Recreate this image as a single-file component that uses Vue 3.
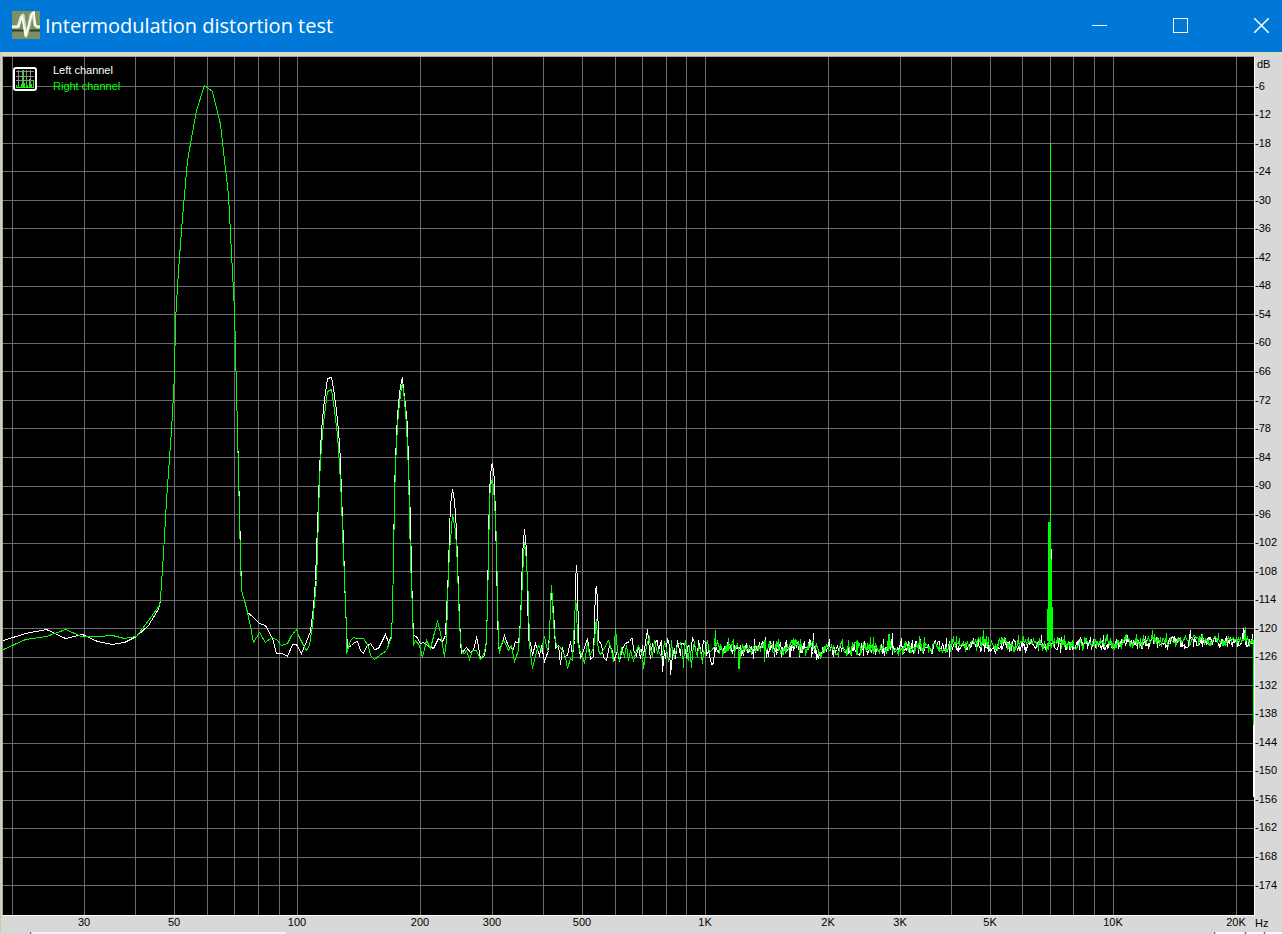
<script setup>
const PLOT = { left: 3, top: 57, width: 1251, height: 858 }

const dbRows = [
  86, 114, 143, 171, 200, 228, 257, 286, 314, 343, 371, 400, 428, 457, 486,
  514, 543, 571, 600, 628, 657, 685, 714, 743, 771, 800, 828, 857, 885,
]
const dbLabels = dbRows.map((_, i) => `-${(i + 1) * 6}`)

const hzColumns = [
  12, 84, 135, 174, 207, 234, 258, 279, 297, 420, 492, 543, 582, 615, 642,
  666, 686, 705, 828, 900, 951, 990, 1022, 1050, 1073, 1094, 1113, 1236,
]
const hzTicks = [
  ['30', 84], ['50', 174], ['100', 297], ['200', 420], ['300', 492], ['500', 582],
  ['1K', 705], ['2K', 828], ['3K', 900], ['5K', 990], ['10K', 1113], ['20K', 1236],
].map(([label, x], i, all) => ({ label, gap: x - (i ? all[i - 1][1] : PLOT.left) }))
const hzTail = PLOT.left + PLOT.width - 1236

const gridPath =
  dbRows.map((y) => `M${PLOT.left} ${y + 0.5}H${PLOT.left + PLOT.width}`).join('') +
  hzColumns.map((x) => `M${x + 0.5} ${PLOT.top}V${PLOT.top + PLOT.height}`).join('')

const leftPoints = `3,640 25,633 46,629 65,638 82,634 97,641 112,644 124,642 136,636 148,625 159,607
160,598 161,583 163,553 166,500 171,430 174,375 175,320 178,270 182,217 187,160 196,110 204,85 212,91 220,124 228,195 234,310 237,430 240,550 241,590 244,600
247,612 252,616 259,623 265,625 272,638 276,653 282,653 287,656 292,644 296,644 301,653 306,641 310,631 313,606 315,580 316,550 318,500 319,470 321,430 323,408 325,392 327,378 331,377 333,388 336,410 338,430 340,460 341,495 343,540 344,580 346,630
347,647 351,645 354,642 357,641 360,650 363,653 366,646 370,643 374,649 378,648 381,642 385,634 388,642 391,636 392,610 393,560 394,490 395,460 396,435 397,415 399,393 401,380 402,378 403,388 405,405 407,425 408,465 410,520 411,570 412,610
413,635 416,636 420,643 423,642 427,645 433,648 438,638 442,641 445,635 446,611 448,570 449,530 450,505 452,489 454,500 456,530 457,560 458,590 460,641 461,653 466,647 470,652 473,650 476,637 477,640 480,658 484,655 486,640
487,600 488,540 489,490 491,464 492,463 494,480 495,520 496,560 497,610 498,648 501,645 504,635 508,646 513,649 515,641 518,643 520,620 521,590 522,555 523,540 524,529 526,550 527,590 528,640 530,642 532,655 535,643 539,655 541,645 544,661
548,650 550,610 551,590 553,610 555,648 558,645 560,664 562,647 564,656 567,655 570,641 572,655 574,640 575,580 576,565 577,580 578,640 580,658 583,650 587,638 590,659 593,656 594,620 595,590 596,586 597,600 598,640
601,644 603,657 606,660 609,645 612,650 614,659 617,650 619,661 622,648 625,643 629,641 631,638 632,638 633,650 636,655 638,646 640,658 642,645 643,655 645,642 647,629 649,650 650,658 652,643 654,652 655,641 657,640 658,650 661,640 662,671 664,650 665,658 667,638 669,645 670,674 672,655 674,648 675,658 677,640 680,655 681,643
683,643 685,650 686,657 687,646 689,645 690,655 692,637 694,642 695,650 697,655 698,640 700,648 701,655 703,640 705,642 706,655 708,650 711,664 713,663 714,650`

const rightPoints = `3,649 25,639 46,636 65,629 81,636 97,636 112,635 124,638 136,636 148,620 159,605
160,598 161,583 163,553 166,500 171,430 174,375 175,320 178,270 182,217 187,160 196,110 204,85 212,91 220,124 228,195 234,310 237,430 240,560 241,590 244,600
247,612 250,626 253,642 259,632 265,642 271,637 276,639 281,645 287,643 291,635 296,629 298,635 302,643 306,650 309,645 312,625 316,580 317,550 319,480 321,445 323,423 325,407 327,391 331,389 334,410 337,434 339,465 341,500 342,530 344,577 346,630 346,653
350,640 353,637 356,638 363,638 368,646 370,655 374,659 379,655 386,650 391,637 392,610 393,560 394,500 395,465 397,425 399,402 401,387 402,383 404,400 406,425 408,470 409,517 410,560 412,610 413,645
415,640 419,645 422,657 426,640 430,648 434,632 437,621 440,632 444,656 446,640 447,600 449,550 451,528 452,514 455,530 457,565 458,600 460,641 462,652 464,653 466,650 469,659 472,650 476,650 480,659 483,654 486,643
487,600 488,560 489,500 490,485 492,478 494,500 496,540 497,600 498,640 499,653 502,640 504,641 508,650 511,645 514,661 518,650 520,620 522,580 523,555 524,542 526,560 528,600 529,645 532,668 535,655 538,645 541,650 544,636 547,650 549,640
550,600 551,585 552,600 553,625 556,646 559,646 562,650 565,657 567,668 570,658 572,660 574,620 575,600 576,605 577,640 579,650 582,656 584,663 587,642 589,655 592,650 594,643 595,625 596,619 597,640 598,650
600,654 603,650 605,645 608,640 611,650 613,661 615,628 617,650 619,660 621,648 624,656 626,645 628,660 630,650 633,660 636,650 638,646 640,650 642,655 643,668 646,645 649,636 650,648 652,656 654,640 655,645 657,652 658,650 661,657 663,648 664,641 666,648 668,660 670,655 671,640 672,652 674,657 676,648 677,645 680,642
682,650 683,667 684,645 685,640 687,656 688,660 689,645 691,667 692,652 694,641 695,650 697,656 698,645 700,650 702,663 703,650 705,655 706,643 707,641 709,652 711,650 714,646`

const floorCurve = [
  [715, 649], [830, 648], [950, 645], [1050, 643], [1120, 642], [1200, 640], [1254, 640],
]
function floorAt(x) {
  const i = floorCurve.findIndex(([px]) => px > x)
  const [x0, y0] = floorCurve[i - 1]
  const [x1, y1] = floorCurve[i]
  return y0 + ((y1 - y0) * (x - x0)) / (x1 - x0)
}

// Random walk around the noise floor; each column is drawn as a short vertical run.
function noise(seed, offset, extremes) {
  let state = seed
  const next = () => {
    state = (state * 1664525 + 1013904223) >>> 0
    return state / 4294967296
  }
  let path = ''
  let drift = 0
  for (let x = 715; x < 1253; x++) {
    const reach = 8 - ((x - 715) / 540) * 3
    const base = floorAt(x) + offset
    drift = drift * 0.55 + (next() - 0.5) * reach * 1.3
    const y = base + drift
    const roll = next()
    let top = y
    let bottom = y
    if (roll > 0.95) top = base - reach - next() * 3
    else if (roll > 0.88) bottom = base + reach * 0.9
    else if (roll > 0.7) {
      top = y - reach * 0.4
      bottom = y + reach * 0.4
    }
    if (extremes[x] > base) bottom = extremes[x]
    if (extremes[x] < base) top = extremes[x]
    path += `L${x} ${Math.round(top)}`
    if (bottom !== top) path += `L${x} ${Math.round(bottom)}`
  }
  return path
}

const toPath = (points) => 'M' + points.trim().split(/\s+/).join('L').replaceAll(',', ' ')

const leftPath =
  toPath(leftPoints) +
  noise(17, 1, { 765: 637, 813: 633, 816: 659, 892: 633, 949: 656, 1060: 652, 1190: 630, 1243: 628, 1244: 630 })
const rightPath =
  toPath(rightPoints) +
  noise(91, 0, { 715: 630, 728: 638, 738: 668, 739: 668, 764: 661, 888: 634, 889: 634, 983: 630, 1018: 635, 1152: 630, 1245: 627 })
</script>

<template>
  <div class="window">
    <header class="titlebar">
      <svg class="app-icon" viewBox="0 0 28 28" aria-hidden="true">
        <rect width="28" height="28" fill="#7d9061" />
        <path d="M0 19.5H28" stroke="#24452b" stroke-width="2" />
        <path d="M0 16H6L9 6L11 4L14 25L17 15L19 4L21 2L23 14L25 16H28" fill="none" stroke="#d5dccb" stroke-width="3" stroke-linejoin="round" />
        <path d="M0 15.5H6.500L10 5L13.500 25L17 13L20 3L22 1L23 14L25 15.500H28" fill="none" stroke="#fff" stroke-width="1.500" />
      </svg>
      <h1 class="title">Intermodulation distortion test</h1>
      <div class="controls">
        <button type="button" aria-label="Minimize">
          <svg viewBox="0 0 15 15"><path d="M0 7.500H15" /></svg>
        </button>
        <button type="button" aria-label="Maximize">
          <svg viewBox="0 0 15 15"><path d="M.5 .5H14.500V14.500H.5Z" /></svg>
        </button>
        <button type="button" aria-label="Close">
          <svg class="smooth" viewBox="0 0 15 15"><path d="M0 0L15 15M15 0L0 15" /></svg>
        </button>
      </div>
    </header>

    <main class="frame">
      <section class="plot">
        <svg
          class="graph"
          :viewBox="`${PLOT.left} ${PLOT.top} ${PLOT.width} ${PLOT.height}`"
          preserveAspectRatio="none"
          role="img"
          aria-label="Spectrum of the left and right channels"
        >
          <path class="grid" :d="gridPath" />
          <g transform="translate(.5 .5)">
            <path class="trace left" :d="leftPath + 'L1252 640'" />
            <path class="trace right" :d="rightPath + 'L1252 640'" />
          </g>
          <path class="carrier" d="M1050 143H1051V550H1052V607H1053V641H1047V609H1048V522H1050Z" />
          <path class="carrier-left" d="M1051 549H1052V559H1051Z" />
          <path class="carrier" d="M1253 640H1254V725H1253Z" />
          <path class="edge" d="M1253 725H1254V797H1253Z" />
        </svg>
        <div class="legend">
          <button type="button" class="grid-toggle" aria-label="Graph settings">
            <svg viewBox="0 0 24 24">
              <rect x="1" y="1" width="22" height="22" rx="2" fill="#000" stroke="#fff" stroke-width="2" />
              <path d="M3 4.500H21M3 9.500H21M3 13.500H21M5.500 3V20M9.500 3V20M13.500 3V20M17.500 3V20" stroke="#8c8c8c" fill="none" />
              <path d="M3 20.500H21M3.500 18V20M5.500 17V20M8.500 17V20M10.500 3V20M11.500 16V20M14.500 18V20M16.500 12V20M18.500 17V20M20.500 14V20" stroke="#0f0" fill="none" />
            </svg>
          </button>
          <ul class="channels">
            <li>Left channel</li>
            <li class="green">Right channel</li>
          </ul>
        </div>
      </section>

      <div class="db-axis">
        <span class="unit">dB</span>
        <span v-for="label in dbLabels" :key="label" class="db">{{ label }}</span>
        <span class="rest"></span>
      </div>

      <div class="hz-axis">
        <template v-for="tick in hzTicks" :key="tick.label">
          <i class="gap" :style="{ flexGrow: tick.gap }"></i>
          <span class="hz">{{ tick.label }}</span>
        </template>
        <i class="gap" :style="{ flexGrow: hzTail }"></i>
      </div>
      <div class="corner">Hz</div>
    </main>
    <footer class="bottom-edge"><i class="mark"></i><i class="texture"></i><i class="fill"></i><i class="mark"></i><i class="white"></i><i class="mark"></i><i class="white short"></i><i class="mark"></i><i class="white short"></i></footer>
  </div>
</template>

<style>
body {
  background: #d8d8d8;
}
</style>

<style scoped>
.window {
  display: flex;
  flex-direction: column;
  height: 100vh;
  overflow: hidden;
  background: #d8d8d8;
  color: #000;
  font: 11px/16px "Liberation Sans", Arial, sans-serif;
}
.titlebar {
  display: flex;
  align-items: center;
  flex: 0 0 52px;
  padding-left: 12px;
  background: #0078d7;
  color: #fff;
}
.app-icon {
  width: 28px;
  height: 28px;
  margin-right: 5px;
  margin-bottom: 2px;
}
.title {
  flex: 1;
  margin: 0;
  font: 400 20px/52px "Open Sans", "Noto Sans", sans-serif;
  white-space: nowrap;
}
.controls {
  display: flex;
  gap: 21px;
  height: 52px;
  margin-right: -9px;
}
.controls button {
  display: flex;
  align-items: center;
  justify-content: center;
  width: 60px;
  padding: 0 0 2px;
  border: 0;
  background: none;
}
.controls svg {
  width: 15px;
  height: 15px;
  fill: none;
  stroke: #fff;
  shape-rendering: crispEdges;
}
.controls svg.smooth {
  shape-rendering: auto;
  stroke-width: 1.5;
}
.frame {
  display: grid;
  flex: 1;
  grid-template-columns: 1fr 27px;
  grid-template-rows: 1fr 16px;
  min-height: 0;
  border-top: 3px solid #dcdcc4;
  border-left: 1px solid #c3cfa6;
}
.plot {
  position: relative;
  min-height: 0;
  margin: 1px 0 0 1px;
  border: 1px solid #a0a0a0;
  border-right-color: #fff;
  border-bottom-color: #fff;
  background: #000;
}
.graph {
  position: absolute;
  inset: 0;
  width: 100%;
  height: 100%;
}
.graph path {
  shape-rendering: crispEdges;
}
.grid {
  fill: none;
  stroke: #6c6c6c;
}
.trace {
  fill: none;
  stroke-width: 1;
}
.left {
  stroke: #fff;
}
.right {
  stroke: #0f0;
}
.carrier {
  fill: #0f0;
}
.carrier-left,
.edge {
  fill: #fff;
}
.legend {
  position: absolute;
  top: 5px;
  left: 10px;
  display: flex;
  gap: 16px;
}
.grid-toggle {
  width: 24px;
  height: 24px;
  margin-top: 5px;
  padding: 0;
  border: 0;
  background: none;
}
.grid-toggle svg {
  display: block;
  width: 24px;
  height: 24px;
}
.channels {
  margin: 0;
  padding: 0;
  list-style: none;
  color: #fff;
}
.channels .green {
  color: #0f0;
}
.db-axis {
  display: flex;
  flex-direction: column;
  min-height: 0;
  padding: 1px 0;
}
.db-axis span {
  display: flex;
  align-items: center;
  min-height: 0;
  flex-basis: 0;
}
.db-axis .unit {
  flex-grow: 54;
  padding-left: 2px;
}
.db-axis .db {
  flex-grow: 100;
}
.db-axis .rest {
  flex-grow: 56;
}
.hz-axis {
  display: flex;
  padding: 0 1px 0 2px;
  line-height: 12px;
}
.gap {
  flex: 1 1 0;
}
.hz {
  display: flex;
  justify-content: center;
  width: 0;
}
.corner {
  line-height: 14px;
}
.bottom-edge {
  display: flex;
  flex: 0 0 2px;
  gap: 1px;
  padding-left: 30px;
}
.mark {
  width: 1px;
  background: #707070;
}
.texture {
  width: 254px;
  background: #f4f4f4;
}
.fill {
  flex: 1;
}
.white {
  width: 28px;
  background: #fff;
}
.white.short {
  width: 16px;
}
</style>
